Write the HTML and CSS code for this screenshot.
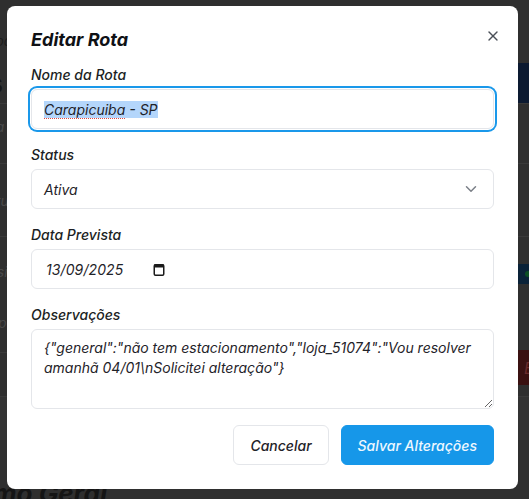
FILE: index.html
```html
<!DOCTYPE html>
<html lang="pt-BR">
<head>
<meta charset="utf-8">
<title>Editar Rota</title>
<link rel="stylesheet" href="styles.css">
</head>
<body>
<div class="page" aria-hidden="true">
  <div class="bg-row row-1"><span class="bg-frag frag-p">Mapa</span></div>
  <div class="bg-row row-2"><span class="bg-big">Rotas C</span><span class="bg-block navy"></span></div>
  <div class="bg-row row-3 sep"><span class="bg-frag frag-ta">Rota</span></div>
  <div class="bg-row row-4 sep"><span class="bg-frag frag-s">Status</span></div>
  <div class="bg-row row-5 sep">
    <div class="bg-left"><span class="bg-frag">Brasil</span><span class="bg-frag frag-o">Grupo</span></div>
    <span class="bg-block teal"><span class="dot"></span></span>
  </div>
  <div class="bg-row row-6 sep"><span class="bg-block red">E</span></div>
  <div class="bg-row row-7 sep"></div>
  <div class="bg-row row-8"><h1 class="bg-title">Resumo Geral</h1></div>
</div>

<div class="overlay">
  <div class="modal" role="dialog" aria-labelledby="dlg-title">
    <h2 class="modal-title" id="dlg-title">Editar Rota</h2>
    <button class="close" type="button" aria-label="Fechar">
      <svg width="16" height="16" viewBox="0 0 24 24" fill="none" stroke="currentColor" stroke-width="2" stroke-linecap="round" stroke-linejoin="round"><path d="M18 6 6 18"/><path d="m6 6 12 12"/></svg>
    </button>

    <div class="fields">
      <div class="field">
        <label class="label">Nome da Rota</label>
        <div class="input input-focus"><span class="selected"><span class="spell">Carapicuiba</span> - SP</span></div>
      </div>

      <div class="field">
        <label class="label">Status</label>
        <div class="input select">
          <span>Ativa</span>
          <svg class="chev" width="12" height="8" viewBox="0 0 12 8" fill="none" stroke="currentColor" stroke-width="1.5" stroke-linecap="round" stroke-linejoin="round"><path d="M1.5 1.8 6 6.2l4.5-4.4"/></svg>
        </div>
      </div>

      <div class="field">
        <label class="label">Data Prevista</label>
        <div class="input date">
          <span class="date-text">13/09/2025</span>
          <svg class="cal" width="12" height="13" viewBox="0 0 12 13" fill="none"><rect x="1.25" y="1.75" width="9.5" height="10.5" rx="1.2" stroke="#1a1a1a" stroke-width="1.5"/><rect x="1" y="1.5" width="10" height="3" fill="#1a1a1a"/></svg>
        </div>
      </div>

      <div class="field">
        <label class="label">Observações</label>
        <textarea class="input textarea">{"general":"não tem estacionamento","loja_51074":"Vou resolver amanhã 04/01\nSolicitei alteração"}</textarea>
      </div>
    </div>

    <div class="actions">
      <button class="btn btn-outline" type="button">Cancelar</button>
      <button class="btn btn-primary" type="button">Salvar Alterações</button>
    </div>
  </div>
</div>
</body>
</html>
```

FILE: styles.css
```css
* {
  box-sizing: border-box;
  margin: 0;
  padding: 0;
}

html, body {
  height: 499px;
  overflow: hidden;
}

body {
  background: #2f2f2f;
  font-family: Inter, "Noto Sans", sans-serif;
  font-feature-settings: "cv11";
}

/* ---------- dimmed page behind the dialog ---------- */
.page {
  display: flex;
  flex-direction: column;
}

.bg-row {
  display: flex;
  justify-content: space-between;
  align-items: center;
}

.sep {
  border-top: 1px solid #3a3a3a;
}

.row-1 { height: 63px; align-items: flex-end; padding-bottom: 14px; }
.row-2 { height: 40px; }
.row-3 { height: 60px; align-items: flex-start; padding-top: 14px; }
.row-4 { height: 73px; }
.row-5 { height: 116px; align-items: flex-start; padding-top: 26px; }
.row-6 { height: 44px; align-items: flex-start; }
.row-7 { height: 44px; background: #333333; }
.row-8 { height: 60px; align-items: flex-end; }

.bg-frag {
  font-size: 14px;
  color: #4a4a4a;
  font-style: italic;
  margin-left: -26px;
}

.frag-p { color: #1c1c1c; }
.frag-o { margin-top: 34px; }

.bg-left {
  display: flex;
  flex-direction: column;
}

.bg-big {
  font-size: 26px;
  font-weight: 700;
  color: #151515;
  margin-left: -70px;
}

.bg-block {
  width: 140px;
  align-self: stretch;
  margin-left: auto;
}

.navy { background: #0c1a31; }

.teal {
  height: 20px;
  align-self: auto;
  margin-top: 1px;
  background: #0a2238;
  display: flex;
  justify-content: flex-end;
  align-items: center;
}

.dot {
  width: 6px;
  height: 6px;
  border-radius: 50%;
  background: #0c4f24;
  margin-right: -2px;
}

.red {
  height: 35px;
  align-self: auto;
  margin-top: -3px;
  background: #3a1111;
  color: #6a2b2b;
  font-style: italic;
  font-size: 16px;
  display: flex;
  align-items: center;
  padding-left: 135px;
}

.bg-title {
  font-size: 26px;
  font-weight: 700;
  font-style: italic;
  color: #151515;
  margin-left: -70px;
  margin-bottom: -9px;
  line-height: 30px;
}

/* ---------- dialog ---------- */
.overlay {
  position: fixed;
  inset: 0;
  padding: 6px 0 0 7px;
}

.modal {
  position: relative;
  width: 511px;
  background: #ffffff;
  border-radius: 8px;
  padding: 24px;
  font-style: italic;
  color: #1f2329;
}

.modal-title {
  font-size: 18px;
  line-height: 20px;
  font-weight: 700;
  color: #0f1115;
  margin-bottom: 15px;
}

.close {
  position: absolute;
  top: 22px;
  right: 17px;
  width: 16px;
  height: 16px;
  border: 0;
  background: transparent;
  color: #4b5058;
  display: flex;
}

.fields {
  display: flex;
  flex-direction: column;
  gap: 16px;
}

.field {
  display: flex;
  flex-direction: column;
  gap: 4px;
}

.label {
  font-size: 14px;
  line-height: 20px;
  font-weight: 500;
  color: #1c1f24;
}

.input {
  height: 40px;
  border: 1px solid #e4e6ea;
  border-radius: 6px;
  padding: 0 12px;
  background: #fff;
  font: inherit;
  font-size: 14px;
  color: #1f2329;
  display: flex;
  align-items: center;
}

.input-focus {
  box-shadow: 0 0 0 1px #ffffff, 0 0 0 3px #1a98ea;
}

.selected {
  background: #b4d6fb;
}

.spell {
  text-decoration: underline dotted #e0483f;
  text-decoration-thickness: 1px;
  text-underline-offset: 3px;
}

.select {
  justify-content: space-between;
  padding-right: 16px;
}

.chev {
  color: #7a7f87;
}

.date {
  padding-left: 14px;
}

.date-text {
  letter-spacing: 0.1px;
}

.cal {
  margin-left: 30px;
}

.textarea {
  display: block;
  height: 80px;
  padding: 8px 12px;
  line-height: 20px;
  resize: vertical;
  outline: none;
  font-style: italic;
  font-family: Inter, "Noto Sans", sans-serif;
  font-feature-settings: "cv11";
}

.actions {
  display: flex;
  justify-content: flex-end;
  gap: 12px;
  margin-top: 16px;
}

.btn {
  height: 40px;
  padding: 0 16px;
  border-radius: 6px;
  font-family: inherit;
  font-feature-settings: "cv11";
  font-size: 14px;
  font-weight: 500;
  font-style: italic;
}

.btn-outline {
  background: #fff;
  border: 1px solid #e4e6ea;
  color: #1f2329;
}

.btn-primary {
  background: #1697e9;
  border: 1px solid #1697e9;
  color: #eef7ff;
}
```
